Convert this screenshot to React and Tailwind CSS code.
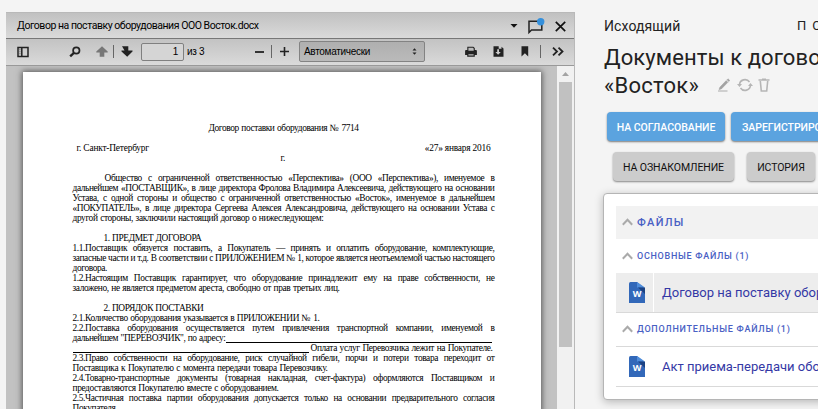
import React from 'react';

const paragraphs = [
  { text: 'Общество с ограниченной ответственностью «Перспектива» (ООО «Перспектива»), именуемое в', box: 'ml-8 w-[390px]' },
  { text: 'дальнейшем «ПОСТАВЩИК», в лице директора Фролова Владимира Алексеевича, действующего на основании', box: 'w-[422px]' },
  { text: 'Устава, с одной стороны и общество с ограниченной ответственностью «Восток», именуемое в дальнейшем', box: 'w-[422px]' },
  { text: '«ПОКУПАТЕЛЬ», в лице директора Сергеева Алексея Александровича, действующего на основании Устава с', box: 'w-[422px]' },
  { text: 'другой стороны, заключили настоящий договор о нижеследующем:', box: 'w-[251px]' },
  { text: '', box: 'w-[422px]' },
  { text: '1. ПРЕДМЕТ ДОГОВОРА', box: 'ml-[31px] w-[98px]' },
  { text: '1.1.Поставщик обязуется поставить, а Покупатель — принять и оплатить оборудование, комплектующие,', box: 'w-[422px]' },
  { text: 'запасные части и т.д. В соответствии с ПРИЛОЖЕНИЕМ № 1, которое является неотъемлемой частью настоящего', box: 'w-[422px]' },
  { text: 'договора.', box: 'w-[36px]' },
  { text: '1.2.Настоящим Поставщик гарантирует, что оборудование принадлежит ему на праве собственности, не', box: 'w-[422px]' },
  { text: 'заложено, не является предметом ареста, свободно от прав третьих лиц.', box: 'w-[267px]' },
  { text: '', box: 'w-[422px]' },
  { text: '2. ПОРЯДОК ПОСТАВКИ', box: 'ml-[31px] w-[100px]' },
  { text: '2.1.Количество оборудования указывается в ПРИЛОЖЕНИИ № 1.', box: 'w-[247px]' },
  { text: '2.2.Поставка оборудования осуществляется путем привлечения транспортной компании, именуемой в', box: 'w-[422px]' },
  { text: 'дальнейшем "ПЕРЕВОЗЧИК", по адресу:', box: 'w-[153px]', rule: 'after' },
  { text: 'Оплата услуг Перевозчика лежит на Покупателе.', box: 'ml-[2px] w-[182px]', rule: 'before' },
  { text: '2.3.Право собственности на оборудование, риск случайной гибели, порчи и потери товара переходит от', box: 'w-[422px]' },
  { text: 'Поставщика к Покупателю с момента передачи товара Перевозчику.', box: 'w-[255px]' },
  { text: '2.4.Товарно-транспортные документы (товарная накладная, счет-фактура) оформляются Поставщиком и', box: 'w-[422px]' },
  { text: 'предоставляются Покупателю вместе с оборудованием.', box: 'w-[206px]' },
  { text: '2.5.Частичная поставка партии оборудования допускается только на основании предварительного согласия', box: 'w-[422px]' },
  { text: 'Покупателя.', box: 'w-[45px]' },
];

function Line({ text, box, rule }) {
  return (
    <div className="flex h-[10px] w-[422px] shrink-0 whitespace-nowrap">
      {rule === 'before' && <span className="w-[236px] shrink-0 border-b border-black" />}
      <p className={`${box} shrink-0 text-justify [text-align-last:justify]`}>{text}</p>
      {rule === 'after' && <span className="w-[266px] shrink-0 border-b border-black" />}
    </div>
  );
}

function TitleBar() {
  return (
    <div className="flex h-[25px] shrink-0 items-center bg-linear-to-b from-[#c1c1c1] to-[#dadada] pl-[11px] pr-[8px] pt-px">
      <span className="w-[242px] whitespace-nowrap font-[Roboto,sans-serif] text-[10.500px] tracking-[-0.460px] text-black">Договор на поставку оборудования ООО Восток.docx</span>
      <svg className="ml-auto" width="8" height="4" viewBox="0 0 8 4"><path d="M.5 0h7L4 3.8z" fill="#111" /></svg>
      <svg className="ml-[9px]" width="18" height="17" viewBox="0 0 18 17">
        <path d="M2 14.500V3.200h12.800v8.800H4.500L2 14.500z" fill="none" stroke="#222" strokeWidth="1.5" />
        <circle cx="13.700" cy="3.700" r="3.700" fill="#3590dc" />
      </svg>
      <svg className="ml-[10px]" width="11" height="11" viewBox="0 0 11 11"><path d="M.8.8l9.4 9.4M10.2.8L.8 10.2" stroke="#111" strokeWidth="1.7" /></svg>
    </div>
  );
}

function Toolbar() {
  return (
    <div className="flex h-[27px] shrink-0 items-center border-b border-[#999] bg-linear-to-b from-[#c3c3c3] to-[#dadada] pl-[11px] pr-[10px] pb-px font-['Liberation_Sans',sans-serif] text-[10px] tracking-[-0.300px] text-black">
      <svg width="12" height="12" viewBox="0 0 12 12"><path d="M1 1.5h10v9H1zM4.8 1.5v9" fill="none" stroke="#222" strokeWidth="1.5" /><path d="M2.2 3.8h1.5M2.2 5.8h1.5M2.2 7.8h1.5" stroke="#777" /></svg>
      <svg className="ml-10" width="12" height="12" viewBox="0 0 12 12"><circle cx="7.3" cy="4.5" r="3.2" fill="none" stroke="#222" strokeWidth="1.7" /><path d="M4.8 7L1.2 10.4" stroke="#222" strokeWidth="2.4" /></svg>
      <svg className="ml-[15px]" width="12" height="11" viewBox="0 0 12 11"><path d="M6 .2L11.7 5.5v1H8.3v4.2H3.7V6.500H.3v-1z" fill="#777" /></svg>
      <span className="ml-[5px] h-[13px] w-px bg-[#666]" />
      <svg className="ml-[7px]" width="12" height="11" viewBox="0 0 12 11"><path d="M1 .3h6.300v4.200h4.200v1L6.200 10.700.5 5.500v-1h3z" fill="#222" /></svg>
      <div className="ml-[8px] flex h-[18px] w-[43px] items-center justify-end rounded-xs border border-[#808080] bg-[#d5d5d5] pr-[5px]">1</div>
      <span className="ml-[3px] w-5 whitespace-nowrap">из 3</span>
      <span className="ml-[48px] h-[2px] w-[9px] bg-[#333]" />
      <span className="ml-[7px] h-[13px] w-px bg-[#666]" />
      <svg className="ml-2" width="9" height="9" viewBox="0 0 9 9"><path d="M0 4.500h9M4.500 0v9" stroke="#222" strokeWidth="1.600" /></svg>
      <div className="ml-[10px] flex h-[21px] w-[126px] items-center justify-between rounded-xs border border-[#838383] bg-linear-to-b from-[#afafaf] to-[#bababa] pl-[4px] pr-[7px]">
        <span>Автоматически</span>
        <svg width="5" height="7" viewBox="0 0 5 7"><path d="M.5 2.500L2.500.3l2 2.200zM.5 4.500l2 2.200 2-2.200z" fill="#222" /></svg>
      </div>
      <svg className="ml-auto" width="12" height="11" viewBox="0 0 12 11"><path d="M2.300 4V.7h6L9.800 2v2H11q.9 0 .9.900V9H9.800v1.700H2.200V9H.1V4.900q0-.9.900-.9z" fill="#222" /><path d="M3.400 1.700h4.400l.9.800v2.200H3.400zM3.400 8.200h5.200v1.300H3.400z" fill="#bbb" /></svg>
      <svg className="ml-[16px]" width="11" height="11" viewBox="0 0 11 11"><path d="M.5.3h5.200v2.500h2.800v-2l2 1.800v8.100H.5z" fill="#222" /><path d="M4.200 3.300h1.800V6h1.800L5.100 8.700 2.400 6h1.800z" fill="#ccc" /></svg>
      <svg className="ml-[17px]" width="8" height="11" viewBox="0 0 8 11"><path d="M.5.3h6.700v10.200L3.900 7.300.5 10.500z" fill="#222" /></svg>
      <span className="ml-[11px] h-[13px] w-px bg-[#666]" />
      <svg className="ml-[11px]" width="12" height="9" viewBox="0 0 12 9"><path d="M1 .7l4 3.800-4 3.800M6.500.7l4 3.800-4 3.800" fill="none" stroke="#222" strokeWidth="1.800" /></svg>
    </div>
  );
}

function Viewer() {
  return (
    <section className="mt-3 ml-1.5 flex h-[397px] w-[569px] shrink-0 flex-col border-r border-t border-[#b9b9b9]">
      <TitleBar />
      <div className="h-px shrink-0 bg-[#777]" />
      <Toolbar />
      <div className="flex min-h-0 flex-1">
        <div className="flex min-w-0 flex-1 overflow-hidden bg-[#c2c2c2] pl-[17px] pt-[6px]">
          <article className="h-[700px] w-[518px] shrink-0 bg-white pl-[49.500px] pt-[51px] font-['Liberation_Serif',serif] text-[9.400px] leading-[10px] tracking-[-0.380px] text-black shadow-[0_0_6px_1px_#555]">
            <p className="ml-[136px] h-5 w-[150px] whitespace-nowrap tracking-[-0.410px] [text-align-last:justify]">Договор поставки оборудования № 7714</p>
            <div className="ml-[4px] flex h-[10px] w-[414px] justify-between whitespace-nowrap">
              <span className="tracking-[-0.200px]">г. Санкт-Петербург</span><span className="tracking-[-0.200px]">«27» января 2016</span>
            </div>
            <p className="mb-[10px] pl-[208px]">г.</p>
            {paragraphs.map((p, i) => <Line key={i} {...p} />)}
          </article>
        </div>
        <div className="flex w-[17px] flex-col items-center bg-[#f1f1f1]">
          <svg className="mt-[6px]" width="7" height="4" viewBox="0 0 7 4"><path d="M0 4L3.500 0 7 4z" fill="#a3a3a3" /></svg>
          <div className="mt-[6px] h-[265px] w-[13px] bg-[#c1c1c1]" />
        </div>
      </div>
    </section>
  );
}

function Chevron() {
  return <svg className="-mt-[3px] mr-[4px] shrink-0" width="11" height="8" viewBox="0 0 11 8"><path d="M.8 6.800L5.500 1.800l4.700 5" fill="none" stroke="#aaa" strokeWidth="2" /></svg>;
}

function WordIcon() {
  return (
    <svg width="16" height="21" viewBox="0 0 16 21">
      <path d="M0 1.500Q0 0 1.500 0H8l8 6.500V21H0z" fill="#3268b9" />
      <path d="M8 0l8 5.500H8z" fill="#4f8ddb" />
      <path d="M9 5.500h7V12z" fill="#1b4283" />
      <text x="8" y="14.500" textAnchor="middle" fontFamily="Open Sans, sans-serif" fontSize="9" fontWeight="700" fill="#fff">W</text>
    </svg>
  );
}

function FileRow({ name, active }) {
  return (
    <div className={`flex h-[40px] w-[240px] shrink-0 border-b border-[#d9d9d9] ${active ? 'bg-[#ededed]' : 'bg-white'}`}>
      <div className="flex w-[38px] shrink-0 items-center justify-center border-r border-white pl-[5px]"><WordIcon /></div>
      <span className="pl-2 pt-px text-[13px] leading-[38px] text-[#3438a5]">{name}</span>
    </div>
  );
}

function Card() {
  return (
    <div className="-ml-px mt-[12px] flex h-[207px] w-[260px] shrink-0 flex-col rounded-sm border border-[#b5b5b5] bg-white pl-3 pt-3 shadow-[0_2px_8px_rgba(0,0,0,0.25)]">
      <h2 className="flex h-[33px] w-[240px] shrink-0 items-center bg-[#f2f2f2] pl-[6px] pt-[2px] text-[11px] font-medium tracking-[1.300px] text-[#4960c4]"><Chevron />ФАЙЛЫ</h2>
      <h3 className="flex h-[34px] shrink-0 items-center pl-[6px] pt-[2px] text-[9px] font-medium tracking-[0.720px] text-[#4960c4]"><Chevron />ОСНОВНЫЕ ФАЙЛЫ (1)</h3>
      <FileRow active name="Договор на поставку оборудования" />
      <h3 className="flex h-[34px] w-[240px] shrink-0 items-center border-b border-[#d9d9d9] pl-[6px] pt-px text-[9px] font-medium tracking-[0.750px] text-[#4960c4]"><Chevron />ДОПОЛНИТЕЛЬНЫЕ ФАЙЛЫ (1)</h3>
      <FileRow name="Акт приема-передачи оборудования" />
    </div>
  );
}

export default function App() {
  return (
    <main className="flex h-[409px] w-[818px] overflow-hidden bg-[#f4f4f4] font-[Roboto,sans-serif] text-[#222]">
      <Viewer />
      <aside className="ml-[29px] w-[214px] shrink-0 whitespace-nowrap pt-[17px]">
        <div className="flex h-[18px] items-center text-[14px] tracking-[0.100px]">
          <span className="w-[193px] shrink-0">Исходящий</span><span className="text-[13px] tracking-[6px]">ПО</span>
        </div>
        <h1 className="mt-[9px] text-[22px] leading-[27px] tracking-[0.100px]">Документы к договору</h1>
        <div className="flex h-[27px] items-center pt-px">
          <span className="w-[113px] text-[22px] leading-[27px] tracking-[0.250px]">«Восток»</span>
          <svg width="14" height="14" viewBox="0 0 14 14"><path d="M2.800 9.300L9.200 2.600l1.700 1.700-6.500 6.600-2.400.7zM10 1.800l1-1 1.800 1.700-1.100 1.100z" fill="#a3a3a3" stroke="#a3a3a3" strokeWidth=".5" /><path d="M1 13h9.500" stroke="#aaa" /></svg>
          <svg className="ml-[6px]" width="16" height="14" viewBox="0 0 16 14"><path d="M2.500 7a5.500 5.500 0 0 1 10-3M13.500 7a5.500 5.500 0 0 1-10 3" fill="none" stroke="#b5b5b5" strokeWidth="1.600" /><path d="M0 6h5L2.500 9zM11 8h5l-2.500-3z" fill="#b5b5b5" /></svg>
          <svg className="ml-[5px]" width="12" height="14" viewBox="0 0 12 14"><path d="M.5 2h11M4 1.200h4M2.300 3l1 10h5.400l1-10" fill="none" stroke="#b5b5b5" strokeWidth="1.600" /></svg>
        </div>
        <div className="mt-[14px] ml-[3px] flex gap-[6px] text-[10.500px] font-medium text-white">
          <button className="h-[29px] w-[118px] shrink-0 rounded bg-[#5ba3df] pt-[2px] tracking-[-0.050px] shadow-[0_1px_2px_rgba(0,0,0,0.5)]">НА СОГЛАСОВАНИЕ</button>
          <button className="h-[29px] w-[130px] shrink-0 rounded bg-[#5ba3df] pl-[11px] pt-[2px] text-left tracking-[-0.050px] shadow-[0_1px_2px_rgba(0,0,0,0.5)]">ЗАРЕГИСТРИРОВАТЬ</button>
        </div>
        <div className="mt-[11px] ml-[9px] flex gap-[13px] text-[10.500px] text-[#111]">
          <button className="h-[29px] w-[121px] shrink-0 rounded-sm bg-[#ccc] pt-[2px] tracking-[-0.100px] shadow-[0_1px_2px_rgba(0,0,0,0.45)]">НА ОЗНАКОМЛЕНИЕ</button>
          <button className="h-[29px] w-[68px] shrink-0 rounded-sm bg-[#ccc] pt-[2px] tracking-[-0.100px] shadow-[0_1px_2px_rgba(0,0,0,0.45)]">ИСТОРИЯ</button>
        </div>
        <Card />
      </aside>
    </main>
  );
}
